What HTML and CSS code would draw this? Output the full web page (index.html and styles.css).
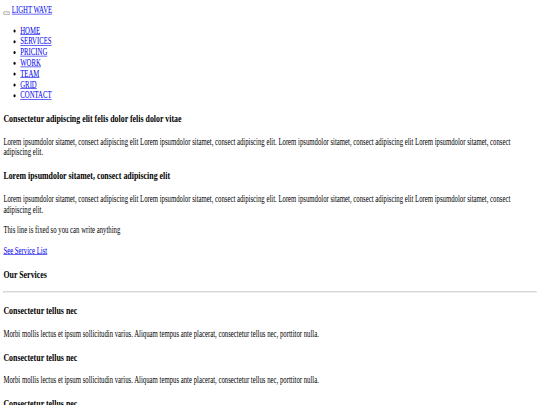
FILE: index.html
```html
<!DOCTYPE html>
<html lang="en">

<head>
    <meta charset="UTF-8">
    <meta name="viewport" content="width=device-width, initial-scale=1.0">
    <title>Light Wave</title>
    <link rel="stylesheet" href="styles.css">
</head>

<body>
    <div class="page">
        <nav class="navbar">
            <button class="navbar-toggler"><span class="navbar-toggler-icon"></span></button>
            <a href="#" class="navbar-brand">LIGHT WAVE</a>
            <div class="navbar-collapse">
                <ul class="navbar-nav">
                    <li><a href="#">HOME</a></li>
                    <li><a href="#">SERVICES</a></li>
                    <li><a href="#">PRICING</a></li>
                    <li><a href="#">WORK</a></li>
                    <li><a href="#">TEAM</a></li>
                    <li><a href="#">GRID</a></li>
                    <li><a href="#">CONTACT</a></li>
                </ul>
            </div>
        </nav>
        <section class="hero">
            <h3>Consectetur adipiscing elit felis dolor felis dolor vitae</h3>
            <p>Lorem ipsumdolor sitamet, consect adipiscing elit Lorem ipsumdolor sitamet, consect adipiscing elit. Lorem ipsumdolor sitamet, consect adipiscing elit Lorem ipsumdolor sitamet, consect adipiscing elit.</p>
            <h3>Lorem ipsumdolor sitamet, consect adipiscing elit</h3>
            <p>Lorem ipsumdolor sitamet, consect adipiscing elit Lorem ipsumdolor sitamet, consect adipiscing elit. Lorem ipsumdolor sitamet, consect adipiscing elit Lorem ipsumdolor sitamet, consect adipiscing elit.</p>
            <p>This line is fixed so you can write anything</p>
            <p><a href="#">See Service List</a></p>
        </section>
        <section class="services">
            <h3>Our Services</h3>
            <hr>
            <div class="service">
                <h3>Consectetur tellus nec</h3>
                <p>Morbi mollis lectus et ipsum sollicitudin varius. Aliquam tempus ante placerat, consectetur tellus nec, porttitor nulla.</p>
            </div>
            <div class="service">
                <h3>Consectetur tellus nec</h3>
                <p>Morbi mollis lectus et ipsum sollicitudin varius. Aliquam tempus ante placerat, consectetur tellus nec, porttitor nulla.</p>
            </div>
            <div class="service">
                <h3>Consectetur tellus nec</h3>
                <p>Morbi mollis lectus et ipsum sollicitudin varius. Aliquam tempus ante placerat, consectetur tellus nec, porttitor nulla.</p>
            </div>
        </section>
    </div>
</body>

</html>
```

FILE: styles.css
```css
html {
    overflow: hidden;
}

body {
    margin: 0;
}

.page {
    width: 1280px;
    padding: 8px;
    box-sizing: border-box;
    font-family: "Liberation Serif", "Times New Roman", serif;
    font-size: 16px;
    color: #000;
    transform: scale(0.421875, 0.6);
    transform-origin: 0 0;
}

a {
    color: #0000ee;
}
```
